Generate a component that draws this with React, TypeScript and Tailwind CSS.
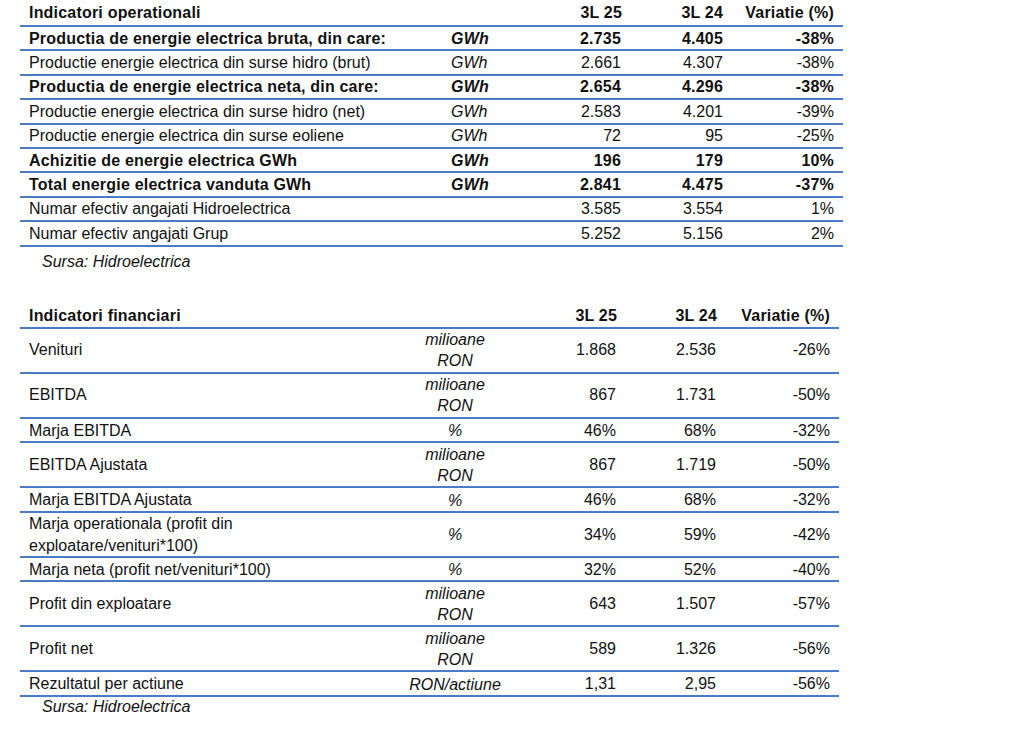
import React from 'react'

type OpRow = { label: string; unit?: string; a: string; b: string; c: string; bold?: boolean }
type FinRow = { label: React.ReactNode; unit: React.ReactNode; a: string; b: string; c: string; tall?: boolean }

const opRows: OpRow[] = [
  { label: 'Productia de energie electrica bruta, din care:', unit: 'GWh', a: '2.735', b: '4.405', c: '-38%', bold: true },
  { label: 'Productie energie electrica din surse hidro (brut)', unit: 'GWh', a: '2.661', b: '4.307', c: '-38%' },
  { label: 'Productia de energie electrica neta, din care:', unit: 'GWh', a: '2.654', b: '4.296', c: '-38%', bold: true },
  { label: 'Productie energie electrica din surse hidro (net)', unit: 'GWh', a: '2.583', b: '4.201', c: '-39%' },
  { label: 'Productie energie electrica din surse eoliene', unit: 'GWh', a: '72', b: '95', c: '-25%' },
  { label: 'Achizitie de energie electrica GWh', unit: 'GWh', a: '196', b: '179', c: '10%', bold: true },
  { label: 'Total energie electrica vanduta GWh', unit: 'GWh', a: '2.841', b: '4.475', c: '-37%', bold: true },
  { label: 'Numar efectiv angajati Hidroelectrica', a: '3.585', b: '3.554', c: '1%' },
  { label: 'Numar efectiv angajati Grup', a: '5.252', b: '5.156', c: '2%' },
]

const mil = (
  <>
    <span>milioane</span>
    <span>RON</span>
  </>
)

const finRows: FinRow[] = [
  { label: 'Venituri', unit: mil, a: '1.868', b: '2.536', c: '-26%', tall: true },
  { label: 'EBITDA', unit: mil, a: '867', b: '1.731', c: '-50%', tall: true },
  { label: 'Marja EBITDA', unit: '%', a: '46%', b: '68%', c: '-32%' },
  { label: 'EBITDA Ajustata', unit: mil, a: '867', b: '1.719', c: '-50%', tall: true },
  { label: 'Marja EBITDA Ajustata', unit: '%', a: '46%', b: '68%', c: '-32%' },
  {
    label: (
      <>
        <span>Marja operationala (profit din</span>
        <span>exploatare/venituri*100)</span>
      </>
    ),
    unit: '%',
    a: '34%',
    b: '59%',
    c: '-42%',
    tall: true,
  },
  { label: 'Marja neta (profit net/venituri*100)', unit: '%', a: '32%', b: '52%', c: '-40%' },
  { label: 'Profit din exploatare', unit: mil, a: '643', b: '1.507', c: '-57%', tall: true },
  { label: 'Profit net', unit: mil, a: '589', b: '1.326', c: '-56%', tall: true },
  { label: 'Rezultatul per actiune', unit: 'RON/actiune', a: '1,31', b: '2,95', c: '-56%' },
]

const line = 'border-b-2 border-[#4a7bc8]'

export default function App() {
  return (
    <div className="min-h-[745px] bg-white pl-[20px] text-[16px] text-[#111]" style={{ fontFamily: '"Liberation Sans", Arial, sans-serif' }}>
      {/* operational */}
      <div className="w-[823px]">
        <div className={`grid h-[27px] grid-cols-[420px_90px_95px_102px_116px] items-center font-bold tracking-[0.2px] ${line}`}>
          <div className="pl-[9px]">Indicatori operationali</div>
          <div />
          <div className="pr-[3px] text-right">3L 25</div>
          <div className="pr-[4px] text-right">3L 24</div>
          <div className="pr-[9px] text-right">Variatie (%)</div>
        </div>
        {opRows.map(r => (
          <div
            key={r.label}
            className={`grid h-[24.4px] grid-cols-[420px_90px_95px_102px_116px] items-center pt-[1px] leading-none ${line} ${r.bold ? 'font-bold tracking-[0.2px]' : ''}`}
          >
            <div className="pl-[9px]">{r.label}</div>
            <div className="pl-[11px] italic">{r.unit}</div>
            <div className="pr-[4px] text-right">{r.a}</div>
            <div className="pr-[4px] text-right">{r.b}</div>
            <div className="pr-[9px] text-right">{r.c}</div>
          </div>
        ))}
      </div>
      <div className="mt-[6px] mb-[33px] h-[18px] pl-[22px] italic leading-[18px]">Sursa: Hidroelectrica</div>

      {/* financial */}
      <div className="w-[819px]">
        <div className={`grid h-[25px] grid-cols-[380px_110px_110px_100px_119px] items-center pb-[1px] font-bold tracking-[0.2px] ${line}`}>
          <div className="pl-[9px]">Indicatori financiari</div>
          <div />
          <div className="pr-[3px] text-right">3L 25</div>
          <div className="pr-[3px] text-right">3L 24</div>
          <div className="pr-[9px] text-right">Variatie (%)</div>
        </div>
        {finRows.map((r, i) => (
          <div
            key={i}
            className={`grid grid-cols-[380px_110px_110px_100px_119px] items-center ${line} ${r.tall ? 'h-[45px]' : 'h-[24.5px]'}`}
          >
            <div className="flex flex-col pl-[9px] leading-[22px]">{r.label}</div>
            <div className="flex flex-col items-center italic leading-[21px]">{r.unit}</div>
            <div className="pr-[4px] text-right">{r.a}</div>
            <div className="pr-[4px] text-right">{r.b}</div>
            <div className="pr-[9px] text-right">{r.c}</div>
          </div>
        ))}
      </div>
      <div className="mt-[1px] h-[18px] pl-[22px] italic leading-[18px]">Sursa: Hidroelectrica</div>
    </div>
  )
}
